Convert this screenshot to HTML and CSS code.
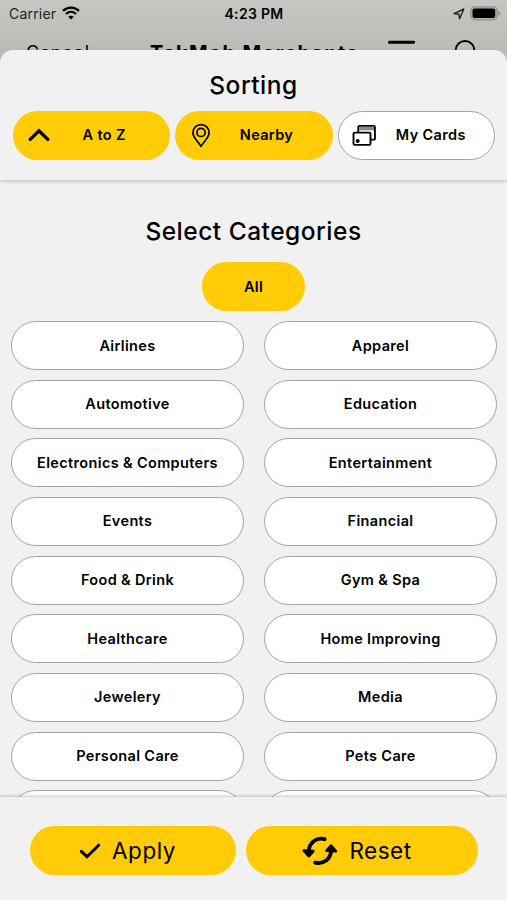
FILE: index.html
```html
<!DOCTYPE html>
<html lang="en">
<head>
    <meta charset="utf-8">
    <title>TakMob Merchants</title>
    <link rel="stylesheet" href="styles.css">
</head>

<body>
    <div class="screen">
        <div class="behind">
            <div class="status">
                <div class="carrier">
                    <span>Carrier</span>
                    <svg width="18" height="14" viewBox="0 0 18 14" fill="none" stroke="#000" stroke-width="2.3">
                        <path d="M1 4.8C5.5 .5 12.5 .5 17 4.8"/>
                        <path d="M4 8C7 5.2 11 5.2 14 8"/>
                        <path d="M9 13.4L6.3 10.7C7.9 9.3 10.1 9.3 11.7 10.7Z" fill="#000" stroke="none"/>
                    </svg>
                </div>
                <div class="clock">4:23 PM</div>
                <div class="battery">
                    <svg width="12" height="12" viewBox="0 0 12 12" fill="none" stroke="#222" stroke-width="1.4" stroke-linejoin="round">
                        <path d="M1 5.6L10.8 1L6.6 10.8L6 6.2Z"/>
                    </svg>
                    <svg width="31" height="15" viewBox="0 0 31 15">
                        <rect x=".8" y=".8" width="26.4" height="13" rx="4" fill="#aeb0ad" stroke="#92948f" stroke-width="1.2"/>
                        <rect x="2.5" y="2.6" width="22.7" height="9.4" rx="2" fill="#000"/>
                        <path d="M28.5 5Q30.3 5.8 30.3 7.3T28.5 9.8Z" fill="#858784"/>
                    </svg>
                </div>
            </div>
            <div class="navbar">
                <span class="cancel">Cancel</span>
                <span class="title">TakMob Merchants</span>
                <svg class="menu" width="28" height="24" viewBox="0 0 28 24" stroke="#000" stroke-width="3" stroke-linecap="round">
                    <path d="M2.4 2.3H26.6M5 12.5H23"/>
                </svg>
                <svg class="search" width="26" height="26" viewBox="0 0 26 26" fill="none" stroke="#000" stroke-width="1.8">
                    <circle cx="12" cy="10.4" r="9.4"/>
                    <path d="M19 17L25 23"/>
                </svg>
            </div>
        </div>

        <div class="sheet">
            <div class="sorting">
                <h2>Sorting</h2>
                <div class="sorts">
                    <button class="btn sort active">
                        <svg width="26" height="26" viewBox="0 0 26 26" fill="none" stroke="#000" stroke-width="3.4" stroke-linecap="round" stroke-linejoin="miter">
                            <path d="M4.2 16.4L13 7.8L21.8 16.4"/>
                        </svg>
                        <span>A to Z</span>
                    </button>
                    <button class="btn sort active">
                        <svg width="26" height="26" viewBox="0 0 26 26" fill="none" stroke="#000" stroke-width="1.7">
                            <path d="M13 23.3C9.5 18 4.9 14.2 4.9 9.7A8.1 8.1 0 0 1 21.1 9.7C21.1 14.2 16.5 18 13 23.3Z" stroke-linejoin="round"/>
                            <circle cx="13" cy="9.4" r="4.1"/>
                        </svg>
                        <span>Nearby</span>
                    </button>
                    <button class="btn sort cards">
                        <svg width="26" height="26" viewBox="0 0 26 26" fill="none" stroke="#000" stroke-width="1.9" stroke-linejoin="round">
                            <path d="M7.3 9.5V3.9Q7.3 2.9 8.3 2.9H22.9Q23.9 2.9 23.9 3.9V15.7Q23.9 16.6 22.9 16.6H19.2"/>
                            <path d="M8.2 5.6H23" stroke="#888" stroke-width="3.4"/>
                            <rect x="2.5" y="9.6" width="17" height="12.3" rx="1.2" fill="#fff"/>
                            <circle cx="6.7" cy="17.9" r="2" fill="#000" stroke="none"/>
                        </svg>
                        <span>My Cards</span>
                    </button>
                </div>
            </div>

            <div class="categories">
                <h2>Select Categories</h2>
                <button class="btn all active">All</button>
                <div class="grid">
                    <button class="btn">Airlines</button>
                    <button class="btn">Apparel</button>
                    <button class="btn">Automotive</button>
                    <button class="btn">Education</button>
                    <button class="btn">Electronics &amp; Computers</button>
                    <button class="btn">Entertainment</button>
                    <button class="btn">Events</button>
                    <button class="btn">Financial</button>
                    <button class="btn">Food &amp; Drink</button>
                    <button class="btn">Gym &amp; Spa</button>
                    <button class="btn">Healthcare</button>
                    <button class="btn">Home Improving</button>
                    <button class="btn">Jewelery</button>
                    <button class="btn">Media</button>
                    <button class="btn">Personal Care</button>
                    <button class="btn">Pets Care</button>
                    <button class="btn"></button>
                    <button class="btn"></button>
                </div>
            </div>

            <div class="actions">
                <button class="btn action active apply">
                    <svg width="22" height="18" viewBox="0 0 22 18" fill="none" stroke="#000" stroke-width="3" stroke-linecap="round">
                        <path d="M2.3 9.3L8 14.7L19.7 3.2"/>
                    </svg>
                    <span>Apply</span>
                </button>
                <button class="btn action active reset">
                    <svg width="36" height="30" viewBox="0 0 36 30" fill="none" stroke="#000" stroke-width="3.8" stroke-linecap="round">
                        <path d="M22.6 3.2C14.4 1 7 6.8 6.8 15"/>
                        <path d="M13.2 26.6C21.4 28.8 28.8 23 29 14.8"/>
                        <path d="M2 14.6L11.2 15.2L6.8 20Z" fill="#000" stroke-width="2.8" stroke-linejoin="round"/>
                        <path d="M33.8 15.2L24.6 14.6L29 9.8Z" fill="#000" stroke-width="2.8" stroke-linejoin="round"/>
                    </svg>
                    <span>Reset</span>
                </button>
            </div>
        </div>
    </div>
</body>
</html>
```

FILE: styles.css
```css
* {
    box-sizing: border-box;
}

body {
    margin: 0;
    font-family: Inter, "Liberation Sans", sans-serif;
    color: #000;
}

.screen {
    display: flex;
    flex-direction: column;
    height: 900px;
    overflow: hidden;
    background: linear-gradient(#c5c7c3, #b7b9b5 62px);
}

.behind {
    height: 50px;
    overflow: hidden;
}

.status {
    display: grid;
    grid-template-columns: 1fr auto 1fr;
    align-items: center;
    height: 27px;
    padding: 0 6px 0 9px;
    font-size: 14px;
}

.carrier {
    display: flex;
    gap: 6px;
    color: #222;
    letter-spacing: 0.2px;
}

.carrier svg {
    margin-top: 1px;
}

.clock {
    margin-right: 2px;
    font-weight: 600;
    letter-spacing: 0.3px;
}

.battery {
    display: flex;
    justify-content: flex-end;
    align-items: center;
    gap: 5px;
}

.navbar {
    display: flex;
    align-items: flex-start;
    height: 40px;
    padding: 13px 27px 0 26px;
    font-size: 18px;
    line-height: 25px;
}

.cancel {
    width: 124px;
    letter-spacing: 0.8px;
}

.title {
    width: 237px;
    font-weight: 700;
    font-size: 20px;
    line-height: 26px;
    letter-spacing: 1.3px;
    white-space: nowrap;
}

.search {
    margin-left: 38px;
}

.sheet {
    display: flex;
    flex-direction: column;
    flex: 1;
    min-height: 0;
    background: #f1f1f1;
    border-radius: 13px 13px 0 0;
}

h2 {
    margin: 0;
    font-size: 24.5px;
    line-height: 29px;
    font-weight: 500;
    letter-spacing: 0.5px;
    text-align: center;
}

.sorting {
    height: 130px;
    padding-top: 21px;
    box-shadow: 0 2px 3px rgba(0, 0, 0, 0.16);
}

.sorts {
    display: grid;
    grid-template-columns: repeat(3, 1fr);
    gap: 5px;
    padding: 11px 12px 0 13px;
}

.btn {
    height: 49px;
    padding: 0 0 1px;
    border: 1px solid #a3a3a3;
    border-radius: 25px;
    background: #fff;
    color: #000;
    font-family: inherit;
    font-size: 14.5px;
    font-weight: 600;
    letter-spacing: 0.35px;
}

.active {
    border: none;
    background: #ffcc07;
}

.sort {
    display: flex;
    align-items: center;
    padding: 0 14px 0 13px;
}

.sort span {
    flex: 1;
    padding-bottom: 2px;
}

.cards {
    padding: 0 9px 0 12px;
}

.categories {
    display: flex;
    flex-direction: column;
    align-items: center;
    flex: 1;
    min-height: 0;
    padding-top: 37px;
    overflow: hidden;
}

.all {
    flex-shrink: 0;
    width: 103px;
    margin-top: 16px;
}

.grid {
    display: grid;
    grid-template-columns: 1fr 1fr;
    gap: 9.66px 20px;
    width: 100%;
    padding: 10px 10px 0 11px;
}

.actions {
    display: flex;
    gap: 10px;
    height: 103px;
    padding: 29px 29px 0 30px;
    box-shadow: 0 -1px 3px rgba(0, 0, 0, 0.22);
}

.action {
    display: flex;
    align-items: center;
    justify-content: center;
    padding-bottom: 0;
    font-size: 22.5px;
    font-weight: 400;
    letter-spacing: 0.5px;
}

.apply {
    width: 206px;
    gap: 11px;
    padding-right: 11px;
}

.reset {
    width: 232px;
    gap: 11px;
    padding-right: 10px;
}

.action span {
    padding-bottom: 1px;
}
```
